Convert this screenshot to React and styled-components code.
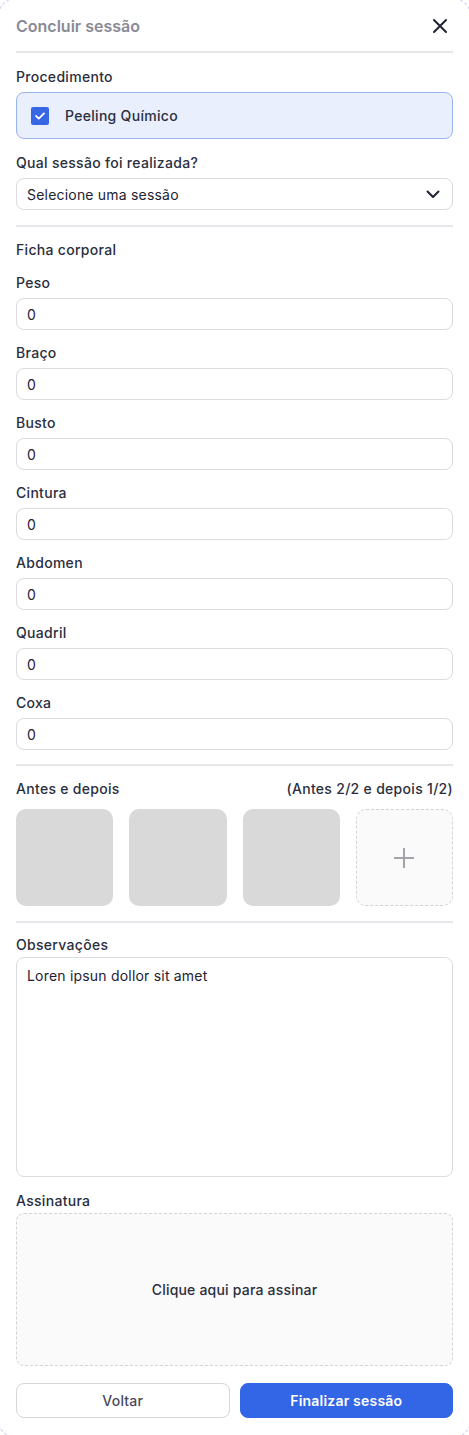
import React from "react";
import styled, { createGlobalStyle } from "styled-components";

const GlobalStyle = createGlobalStyle`
  html, body {
    margin: 0;
    padding: 0;
    overflow: hidden;
    background: #ffffff;
  }
  body {
    font-family: Inter, "Noto Sans", "Liberation Sans", sans-serif;
    color: #1e2233;
    -webkit-font-smoothing: antialiased;
  }
  * {
    box-sizing: border-box;
  }
`;

const measures = ["Peso", "Braço", "Busto", "Cintura", "Abdomen", "Quadril", "Coxa"];

export default function App() {
  return (
    <>
      <GlobalStyle />
      <Panel>
        <Header>
          <Title>Concluir sessão</Title>
          <CloseButton aria-label="Fechar">
            <svg width="16" height="16" viewBox="0 0 16 16" fill="none">
              <path d="M2 2L14 14M14 2L2 14" stroke="#1e2233" strokeWidth="2" strokeLinecap="round" />
            </svg>
          </CloseButton>
        </Header>
        <Divider $top={0} />

        <Label $top={14}>Procedimento</Label>
        <ProcedureCard>
          <CheckBox>
            <svg width="10" height="8" viewBox="0 0 10 8" fill="none">
              <path d="M1 4L3.8 6.6L9 1.4" stroke="#ffffff" strokeWidth="1.8" strokeLinecap="round" strokeLinejoin="round" />
            </svg>
          </CheckBox>
          <span>Peeling Químico</span>
        </ProcedureCard>

        <Label $top={14}>Qual sessão foi realizada?</Label>
        <Select>
          <span>Selecione uma sessão</span>
          <svg width="14" height="9" viewBox="0 0 14 9" fill="none">
            <path d="M1.5 1.5L7 7L12.5 1.5" stroke="#1e2233" strokeWidth="2" strokeLinecap="round" strokeLinejoin="round" />
          </svg>
        </Select>

        <Divider $top={15} />

        <Label $top={13} $gap={0}>Ficha corporal</Label>
        {measures.map((name) => (
          <React.Fragment key={name}>
            <Label $top={13}>{name}</Label>
            <Input>0</Input>
          </React.Fragment>
        ))}

        <Divider $top={14} />

        <SplitRow>
          <span>Antes e depois</span>
          <span>(Antes 2/2 e depois 1/2)</span>
        </SplitRow>
        <PhotoGrid>
          <Photo />
          <Photo />
          <Photo />
          <AddPhoto>
            <svg width="22" height="22" viewBox="0 0 22 22" fill="none">
              <path d="M11 1V21M1 11H21" stroke="#a3a3ab" strokeWidth="2" />
            </svg>
          </AddPhoto>
        </PhotoGrid>

        <Divider $top={15} />

        <Label $top={12} $gap={2}>Observações</Label>
        <TextArea>Loren ipsun dollor sit amet</TextArea>

        <Label $top={14} $gap={2}>Assinatura</Label>
        <SignaturePad>Clique aqui para assinar</SignaturePad>

        <Actions>
          <Button>Voltar</Button>
          <Button $primary>Finalizar sessão</Button>
        </Actions>
      </Panel>
    </>
  );
}

const Panel = styled.div`
  margin: -2px;
  min-height: 1439px;
  padding: 0 17px 19px;
  border: 1px dashed #cbc7f0;
  border-radius: 18px;
  display: flex;
  flex-direction: column;
  background: #ffffff;
`;

const Header = styled.div`
  height: 52px;
  padding-top: 2px;
  display: flex;
  align-items: center;
  justify-content: space-between;
`;

const Title = styled.h2`
  margin: 0;
  font-size: 16px;
  font-weight: 600;
  color: #8a8a95;
`;

const CloseButton = styled.button`
  border: 0;
  background: none;
  padding: 0;
  margin-right: 5px;
  display: flex;
  cursor: pointer;
`;

const Divider = styled.div`
  height: 2px;
  background: #e6e6eb;
  margin-top: ${(p) => p.$top}px;
  flex-shrink: 0;
`;

const Label = styled.div`
  margin-top: ${(p) => p.$top}px;
  margin-bottom: ${(p) => (p.$gap !== undefined ? p.$gap : 5)}px;
  font-size: 14px;
  line-height: 20px;
  font-weight: 500;
  letter-spacing: 0.3px;
  color: #2a2e3e;
`;

const ProcedureCard = styled.div`
  height: 47px;
  display: flex;
  align-items: center;
  gap: 16px;
  padding: 0 14px;
  background: #e9effc;
  border: 1px solid #9ab4f2;
  border-radius: 8px;
  font-size: 14px;
  font-weight: 500;
  letter-spacing: 0.3px;
  color: #2a2e3e;
`;

const CheckBox = styled.span`
  width: 18px;
  height: 18px;
  border-radius: 2px;
  background: #3867e4;
  display: flex;
  align-items: center;
  justify-content: center;
`;

const Field = styled.div`
  height: 32px;
  display: flex;
  align-items: center;
  padding: 0 10px;
  border: 1px solid #dbdbe0;
  border-radius: 8px;
  font-size: 14px;
  letter-spacing: 0.2px;
  color: #1e2233;
`;

const Select = styled(Field)`
  justify-content: space-between;
  padding-right: 12px;
`;

const Input = styled(Field)``;

const SplitRow = styled.div`
  margin-top: 13px;
  margin-bottom: 10px;
  display: flex;
  justify-content: space-between;
  font-size: 14px;
  line-height: 20px;
  font-weight: 500;
  letter-spacing: 0.3px;
  color: #2a2e3e;
`;

const PhotoGrid = styled.div`
  display: grid;
  grid-template-columns: repeat(4, 1fr);
  gap: 16px;
`;

const Photo = styled.div`
  height: 97px;
  border-radius: 10px;
  background: #d9d9d9;
`;

const AddPhoto = styled.div`
  height: 97px;
  border-radius: 10px;
  border: 1px dashed #d3d3d8;
  background: #fafafa;
  display: flex;
  align-items: center;
  justify-content: center;
`;

const TextArea = styled.div`
  height: 220px;
  padding: 8px 10px;
  border: 1px solid #dbdbe0;
  border-radius: 8px;
  font-size: 14px;
  line-height: 20px;
  letter-spacing: 0.2px;
  color: #1e2233;
`;

const SignaturePad = styled.div`
  height: 153px;
  display: flex;
  align-items: center;
  justify-content: center;
  border: 1px dashed #d3d3d8;
  border-radius: 8px;
  background: #fafafa;
  font-size: 14px;
  font-weight: 500;
  letter-spacing: 0.2px;
  color: #2a2e3e;
`;

const Actions = styled.div`
  margin-top: 17px;
  display: grid;
  grid-template-columns: 1fr 1fr;
  gap: 10px;
`;

const Button = styled.button`
  height: 35px;
  border-radius: 8px;
  font-family: inherit;
  font-size: 14px;
  letter-spacing: 0.2px;
  font-weight: ${(p) => (p.$primary ? 600 : 500)};
  color: ${(p) => (p.$primary ? "#ffffff" : "#474b5a")};
  background: ${(p) => (p.$primary ? "#3366e6" : "#ffffff")};
  border: 1px solid ${(p) => (p.$primary ? "#3366e6" : "#d5d5da")};
  cursor: pointer;
`;
